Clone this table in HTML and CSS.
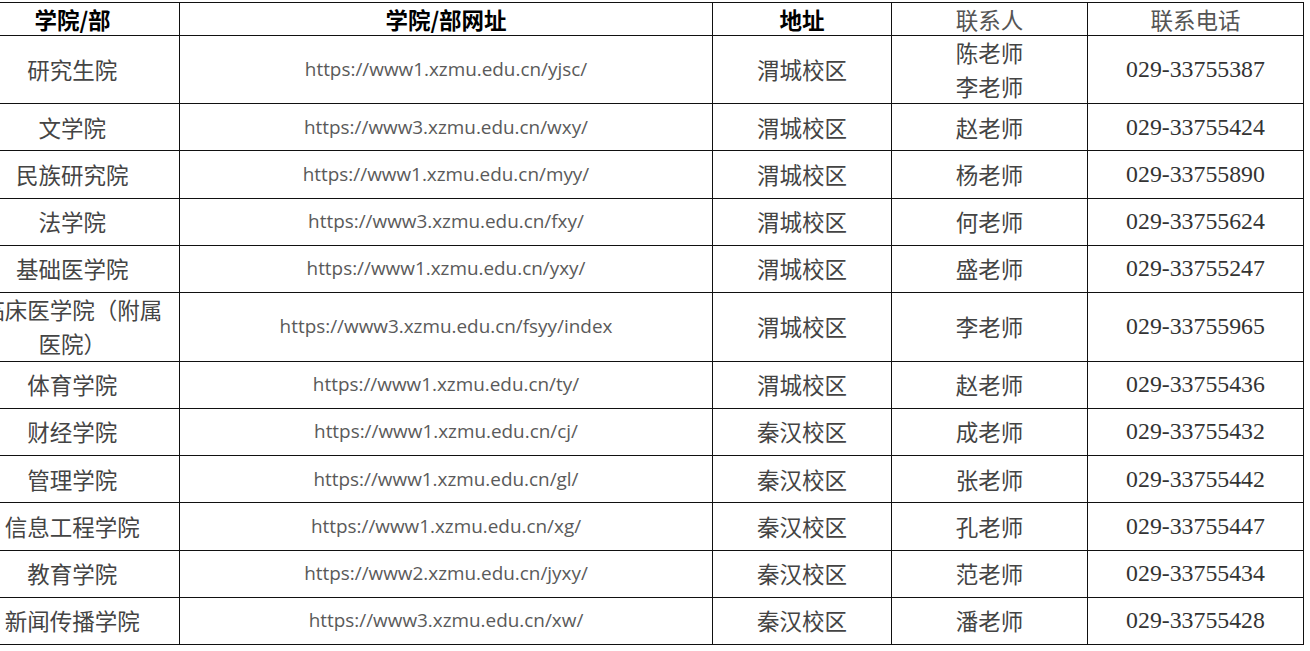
FILE: index.html
```html
<!DOCTYPE html>
<html lang="zh-CN">
<head>
<meta charset="utf-8">
<title>学院/部联系方式</title>
<link rel="stylesheet" href="styles.css">
</head>
<body>
<div class="wrap">
<table class="contacts">
  <colgroup>
    <col class="c-name"><col class="c-url"><col class="c-addr"><col class="c-person"><col class="c-phone">
  </colgroup>
  <thead>
    <tr>
      <th class="strong">学院/部</th>
      <th class="strong">学院/部网址</th>
      <th class="strong">地址</th>
      <th class="soft">联系人</th>
      <th class="soft">联系电话</th>
    </tr>
  </thead>
  <tbody>
    <tr><td class="name">研究生院</td><td class="url">https://www1.xzmu.edu.cn/yjsc/</td><td>渭城校区</td><td>陈老师<br>李老师</td><td class="phone">029-33755387</td></tr>
    <tr><td class="name">文学院</td><td class="url">https://www3.xzmu.edu.cn/wxy/</td><td>渭城校区</td><td>赵老师</td><td class="phone">029-33755424</td></tr>
    <tr><td class="name">民族研究院</td><td class="url">https://www1.xzmu.edu.cn/myy/</td><td>渭城校区</td><td>杨老师</td><td class="phone">029-33755890</td></tr>
    <tr><td class="name">法学院</td><td class="url">https://www3.xzmu.edu.cn/fxy/</td><td>渭城校区</td><td>何老师</td><td class="phone">029-33755624</td></tr>
    <tr><td class="name">基础医学院</td><td class="url">https://www1.xzmu.edu.cn/yxy/</td><td>渭城校区</td><td>盛老师</td><td class="phone">029-33755247</td></tr>
    <tr><td class="name">临床医学院（附属<br>医院）</td><td class="url">https://www3.xzmu.edu.cn/fsyy/index</td><td>渭城校区</td><td>李老师</td><td class="phone">029-33755965</td></tr>
    <tr><td class="name">体育学院</td><td class="url">https://www1.xzmu.edu.cn/ty/</td><td>渭城校区</td><td>赵老师</td><td class="phone">029-33755436</td></tr>
    <tr><td class="name">财经学院</td><td class="url">https://www1.xzmu.edu.cn/cj/</td><td>秦汉校区</td><td>成老师</td><td class="phone">029-33755432</td></tr>
    <tr><td class="name">管理学院</td><td class="url">https://www1.xzmu.edu.cn/gl/</td><td>秦汉校区</td><td>张老师</td><td class="phone">029-33755442</td></tr>
    <tr><td class="name">信息工程学院</td><td class="url">https://www1.xzmu.edu.cn/xg/</td><td>秦汉校区</td><td>孔老师</td><td class="phone">029-33755447</td></tr>
    <tr><td class="name">教育学院</td><td class="url">https://www2.xzmu.edu.cn/jyxy/</td><td>秦汉校区</td><td>范老师</td><td class="phone">029-33755434</td></tr>
    <tr><td class="name">新闻传播学院</td><td class="url">https://www3.xzmu.edu.cn/xw/</td><td>秦汉校区</td><td>潘老师</td><td class="phone">029-33755428</td></tr>
  </tbody>
</table>
</div>
</body>
</html>
```

FILE: styles.css
```css
html, body {
  margin: 0;
  padding: 0;
  background: #ffffff;
  overflow: hidden;
}

.wrap {
  padding-top: 2px;
}

.contacts {
  margin-left: -35px;
  width: 1339px;
  table-layout: fixed;
  border-collapse: collapse;
  font-family: "Noto Sans CJK SC", "Noto Sans", sans-serif;
  font-size: 22.5px;
  color: #444444;
}

.c-name { width: 214px; }
.c-url { width: 533px; }
.c-addr { width: 179px; }
.c-person { width: 196px; }
.c-phone { width: 216px; }

.contacts th,
.contacts td {
  border: 1px solid #111111;
  padding: 0;
  text-align: center;
  vertical-align: middle;
  line-height: 33.6px;
  white-space: nowrap;
}

.contacts thead tr {
  height: 32px;
}

.contacts th {
  font-weight: normal;
  line-height: 32px;
}

.contacts tbody tr {
  height: 47.3px;
}

.contacts th.strong {
  font-weight: bold;
  color: #000000;
}

.contacts th.soft {
  color: #555555;
}

.contacts .name {
  border-left: none;
}

.contacts .url {
  font-family: "Open Sans", "Noto Sans", sans-serif;
  font-size: 18.9px;
  color: #5a5a5a;
}

.contacts .phone {
  font-family: "Liberation Serif", serif;
  font-size: 23.8px;
  color: #333333;
}
```
